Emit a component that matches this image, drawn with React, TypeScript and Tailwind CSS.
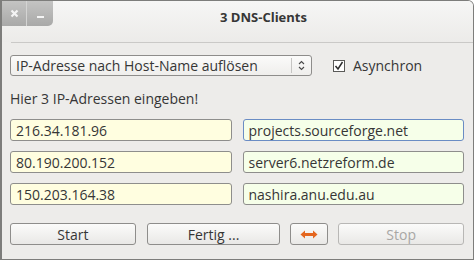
import React from "react";

const font = { fontFamily: '"Open Sans", "Noto Sans", sans-serif' };

function Field({ value, bg, focused }: { value: string; bg: string; focused?: boolean }) {
  return (
    <div
      className={`h-[22px] flex-1 rounded-[3px] border flex items-center pl-[5px] text-[14px] text-[#363636] ${bg} ${
        focused ? "border-[#6a8cc4]" : "border-[#8e8e8c]"
      }`}
    >
      {value}
    </div>
  );
}

function Btn({ children, disabled, className = "" }: { children: React.ReactNode; disabled?: boolean; className?: string }) {
  return (
    <div
      className={`h-[22px] rounded-[3px] border flex items-center justify-center text-[14px] bg-gradient-to-b from-[#fbfbfa] to-[#e9e8e6] ${
        disabled ? "border-[#b8b7b5] text-[#a8a7a5]" : "border-[#8e8d8b] text-[#363636]"
      } ${className}`}
    >
      {children}
    </div>
  );
}

export default function App() {
  return (
    <div className="w-[474px] h-[260px] bg-white" style={font}>
      <div className="w-[474px] h-[260px] border border-[#7d7d7b] border-l-2 rounded-tr-[6px] overflow-hidden bg-[#edecea] flex flex-col">
        {/* Title bar */}
        <div className="h-[41px] bg-gradient-to-b from-[#f6f6f5] to-[#ecebe9] flex relative">
          <div className="flex h-[25px] w-[51px] rounded-br-[5px] overflow-hidden bg-gradient-to-b from-[#c4c4c3] to-[#a9a9a8]">
            <div className="w-[25px] flex items-center justify-center border-r border-[#d4d4d3]">
              <svg width="9" height="9" viewBox="0 0 9 9">
                <path d="M1.5 1.5 L7.5 7.5 M7.5 1.5 L1.5 7.5" stroke="#f4f4f4" strokeWidth="2.2" />
              </svg>
            </div>
            <div className="flex-1 flex items-end justify-center pb-[8px]">
              <div className="w-[7px] h-[2px] bg-[#f4f4f4]" />
            </div>
          </div>
          <div className="absolute left-[52px] right-0 top-[7px] text-center text-[13px] font-bold text-[#363636]">
            3 DNS-Clients
          </div>
        </div>
        <div className="ml-[9px] h-px bg-[#cac9c7]" />
        <div className="pl-[8px] pr-[9px] flex flex-col">
          {/* combo row */}
          <div className="mt-[12px] flex items-center">
            <div className="w-[302px] h-[21px] rounded-[3px] border border-[#8e8d8b] bg-gradient-to-b from-[#fbfbfa] to-[#efeeec] flex items-center">
              <div className="flex-1 pl-[5px] text-[14px] text-[#363636] leading-none">IP-Adresse nach Host-Name auflösen</div>
              <div className="w-px h-[15px] bg-[#c6c5c3]" />
              <div className="w-[19px] flex justify-center">
                <svg width="7" height="11" viewBox="0 0 7 11">
                  <path d="M1 4 L3.5 1.5 L6 4 M1 7 L3.5 9.5 L6 7" stroke="#4a4a4a" strokeWidth="1.1" fill="none" />
                </svg>
              </div>
            </div>
            <div className="ml-[21px] w-[12px] h-[12px] border border-[#5a5a58] bg-white flex items-center justify-center">
              <svg width="10" height="10" viewBox="0 0 10 10">
                <path d="M1.5 5 L4 8 L8.5 1" stroke="#2e2e2e" strokeWidth="1.5" fill="none" />
              </svg>
            </div>
            <div className="ml-[8px] text-[14px] text-[#363636]">Asynchron</div>
          </div>
          <div className="mt-[13px] h-[20px] text-[14px] text-[#363636] leading-[20px]">Hier 3 IP-Adressen eingeben!</div>
          <div className="mt-[10px] flex flex-col gap-[10px]">
            <div className="flex gap-[11px]">
              <Field value="216.34.181.96" bg="bg-[#fffee0]" />
              <Field value="projects.sourceforge.net" bg="bg-[#f6ffe9]" focused />
            </div>
            <div className="flex gap-[11px]">
              <Field value="80.190.200.152" bg="bg-[#fffee0]" />
              <Field value="server6.netzreform.de" bg="bg-[#f6ffe9]" />
            </div>
            <div className="flex gap-[11px]">
              <Field value="150.203.164.38" bg="bg-[#fffee0]" />
              <Field value="nashira.anu.edu.au" bg="bg-[#f6ffe9]" />
            </div>
          </div>
          <div className="mt-[18px] flex">
            <Btn className="w-[126px]">Start</Btn>
            <Btn className="w-[134px] ml-[11px]">Fertig ...</Btn>
            <Btn className="w-[38px] ml-[10px]">
              <svg width="18" height="9" viewBox="0 0 18 9">
                <path d="M0.5 4.5 L5 0.5 L5 3 L13 3 L13 0.5 L17.5 4.5 L13 8.5 L13 6 L5 6 L5 8.5 Z" fill="#e4661f" />
              </svg>
            </Btn>
            <Btn className="w-[126px] ml-[10px]" disabled>Stop</Btn>
          </div>
        </div>
      </div>
    </div>
  );
}
